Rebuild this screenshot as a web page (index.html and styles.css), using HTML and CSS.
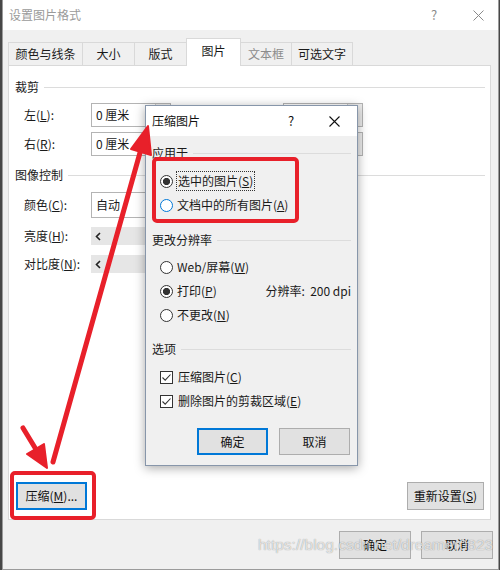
FILE: index.html
```html
<!DOCTYPE html>
<html lang="zh-CN">
<head>
<meta charset="utf-8">
<title>设置图片格式</title>
<link rel="stylesheet" href="styles.css">
</head>
<body>
<div class="window">
  <div class="titlebar">
    <span class="title">设置图片格式</span>
    <span class="tb-help">?</span>
    <span class="tb-close"><svg width="11" height="11" viewBox="0 0 11 11"><path d="M0.5 0.5L10.5 10.5M10.5 0.5L0.5 10.5" stroke="#8a8a8a" stroke-width="1"/></svg></span>
  </div>
  <div class="tabs">
    <div class="tab w1">颜色与线条</div>
    <div class="tab w2">大小</div>
    <div class="tab w3">版式</div>
    <div class="tab sel">图片</div>
    <div class="tab w5 dis">文本框</div>
    <div class="tab w6">可选文字</div>
  </div>
  <div class="panel">
    <div class="sec"><span>裁剪</span><i class="line"></i></div>
    <div class="row r1">
      <span class="lbl">左(<u>L</u>):</span>
      <span class="field"><span class="val">0 厘米</span><span class="spin"></span></span>
      <span class="lbl2">上(<u>T</u>):</span>
      <span class="field"><span class="val">0 厘米</span><span class="spin"></span></span>
    </div>
    <div class="row r2">
      <span class="lbl">右(<u>R</u>):</span>
      <span class="field"><span class="val">0 厘米</span><span class="spin"></span></span>
      <span class="lbl2">下(<u>B</u>):</span>
      <span class="field"><span class="val">0 厘米</span><span class="spin"></span></span>
    </div>
    <div class="sec s2"><span>图像控制</span><i class="line"></i></div>
    <div class="row r3">
      <span class="lbl">颜色(<u>C</u>):</span>
      <span class="combo">自动</span>
    </div>
    <div class="row r4">
      <span class="lbl">亮度(<u>H</u>):</span>
      <span class="slider"><svg width="6" height="9" viewBox="0 0 6 9"><path d="M5 1L1.5 4.5L5 8" fill="none" stroke="#222" stroke-width="1.6"/></svg></span>
    </div>
    <div class="row r5">
      <span class="lbl">对比度(<u>N</u>):</span>
      <span class="slider"><svg width="6" height="9" viewBox="0 0 6 9"><path d="M5 1L1.5 4.5L5 8" fill="none" stroke="#222" stroke-width="1.6"/></svg></span>
    </div>
    <div class="bottom">
      <span class="btn focus bc">压缩(<u>M</u>)...</span>
      <span class="btn br">重新设置(<u>S</u>)</span>
    </div>
  </div>
  <div class="footer">
    <span class="btn bf">确定</span>
    <span class="btn bf">取消</span>
  </div>
</div>

<div class="popup">
  <div class="ptitle">
    <span class="title">压缩图片</span>
    <span class="p-help">?</span>
    <span class="p-close"><svg width="11" height="11" viewBox="0 0 11 11"><path d="M0.5 0.5L10.5 10.5M10.5 0.5L0.5 10.5" stroke="#111" stroke-width="1.1"/></svg></span>
  </div>
  <div class="pbody">
    <div class="sec"><span>应用于</span><i class="line"></i></div>
    <div class="opts o1">
      <div class="opt"><i class="radio on"></i><span class="focusbox">选中的图片(<u>S</u>)</span></div>
      <div class="opt"><i class="radio hover"></i><span>文档中的所有图片(<u>A</u>)</span></div>
    </div>
    <div class="sec s2"><span>更改分辨率</span><i class="line"></i></div>
    <div class="opts o2">
      <div class="opt"><i class="radio"></i><span>Web/屏幕(<u>W</u>)</span></div>
      <div class="opt"><i class="radio on"></i><span>打印(<u>P</u>)</span><span class="res">分辨率:&nbsp;&nbsp;200 dpi</span></div>
      <div class="opt"><i class="radio"></i><span>不更改(<u>N</u>)</span></div>
    </div>
    <div class="sec s3"><span>选项</span><i class="line"></i></div>
    <div class="opts o3">
      <div class="opt"><i class="check"><svg width="11" height="11" viewBox="0 0 11 11"><path d="M1.5 5.5L4.2 8.2L9.5 2.5" fill="none" stroke="#333" stroke-width="1.1"/></svg></i><span>压缩图片(<u>C</u>)</span></div>
      <div class="opt"><i class="check"><svg width="11" height="11" viewBox="0 0 11 11"><path d="M1.5 5.5L4.2 8.2L9.5 2.5" fill="none" stroke="#333" stroke-width="1.1"/></svg></i><span>删除图片的剪裁区域(<u>E</u>)</span></div>
    </div>
    <div class="pbtns">
      <span class="btn focus pb">确定</span>
      <span class="btn pb">取消</span>
    </div>
  </div>
</div>

<svg class="annot" width="500" height="570" viewBox="0 0 500 570">
  <g fill="none" stroke="#e8202a" stroke-linejoin="round">
    <rect x="154" y="159" width="143" height="62" rx="3" stroke-width="4"/>
    <rect x="12" y="473" width="82" height="45" rx="3" stroke-width="4"/>
    <path d="M53 462L143 142" stroke-width="5" stroke-linecap="round"/>
    <path d="M23 428L40 456" stroke-width="5" stroke-linecap="round"/>
  </g>
  <g fill="#e8202a" stroke="#e8202a" stroke-width="2" stroke-linejoin="round">
    <path d="M148 126L151 155L131 149Z"/>
    <path d="M47 468L44 444L27 454Z"/>
  </g>
</svg>

<div class="watermark">https://blog.csdn.net/dreamer0823</div>
</body>
</html>
```

FILE: styles.css
```css
html, body {
  margin: 0;
  padding: 0;
}
body {
  width: 500px;
  height: 570px;
  overflow: hidden;
  position: relative;
  background: #474747;
  font-family: "Noto Sans CJK SC", "Microsoft YaHei", sans-serif;
  font-size: 12px;
  line-height: 18px;
  color: #1a1a1a;
}
u { text-decoration: underline; text-underline-offset: 1px; }

.window {
  margin-left: 2px;
  width: 497px;
  height: 570px;
  box-sizing: border-box;
  border: 1px solid #9b9b9b;
  border-top: none;
  background: #f0f0f0;
  display: flex;
  flex-direction: column;
}

.titlebar {
  height: 30px;
  background: #fff;
  display: flex;
  align-items: center;
  padding-left: 6px;
  color: #9a9a9a;
}
.titlebar .title { flex: 1; }
.tb-help {
  width: 20px;
  text-align: center;
  color: #8a8a8a;
  font-size: 13px;
}
.tb-close {
  width: 20px;
  margin-left: 24px;
  margin-right: 10px;
  display: flex;
  justify-content: center;
}

.tabs {
  display: flex;
  align-items: flex-end;
  height: 27px;
  margin-top: 8px;
  padding-left: 5px;
}
.tab {
  height: 23px;
  box-sizing: border-box;
  border: 1px solid #d9d9d9;
  border-bottom: none;
  margin-right: -1px;
  display: flex;
  align-items: center;
  justify-content: center;
  background: #f0f0f0;
}
.w1 { width: 75px; }
.w2 { width: 53px; }
.w3 { width: 53px; }
.w5 { width: 52px; }
.w6 { width: 62px; }
.tab.sel {
  width: 55px;
  height: 28px;
  background: #fff;
  position: relative;
  z-index: 1;
  margin-bottom: -1px;
  padding-bottom: 3px;
}
.tab.dis { color: #8c8c8c; }

.panel {
  margin: 0 7px 0 5px;
  height: 455px;
  box-sizing: border-box;
  border: 1px solid #d9d9d9;
  background: #fff;
  display: flex;
  flex-direction: column;
  padding: 12px 5px 9px 6px;
}

.sec {
  display: flex;
  align-items: center;
  height: 18px;
  gap: 5px;
}
.sec .line {
  flex: 1;
  height: 1px;
  background: #dcdcdc;
}
.panel .s2 { margin-top: 10px; }

.row {
  display: flex;
  align-items: center;
  height: 24px;
  padding-left: 9px;
}
.row.r1 { margin-top: 7px; }
.row.r2 { margin-top: 5px; }
.row.r3 { margin-top: 9px; }
.row.r4 { margin-top: 7px; }
.row.r5 { margin-top: 4px; }
.lbl { width: 67px; }
.lbl2 { width: 82px; margin-left: 30px; }

.field {
  width: 80px;
  height: 24px;
  box-sizing: border-box;
  border: 1px solid #b4b4b4;
  background: #fff;
  display: flex;
}
.field .val { flex: 1; padding-left: 4px; line-height: 22px; }
.field .spin {
  width: 14px;
  background: #ececec;
  border-left: 1px solid #c8c8c8;
}
.combo {
  width: 110px;
  height: 26px;
  box-sizing: border-box;
  border: 1px solid #b4b4b4;
  background: #fff;
  padding-left: 4px;
  line-height: 24px;
}
.slider {
  width: 160px;
  height: 18px;
  background: #e6e6e6;
  display: flex;
  align-items: center;
  padding-left: 4px;
  box-sizing: border-box;
}

.bottom {
  margin-top: auto;
  display: flex;
  justify-content: space-between;
  padding: 0 1px;
}

.btn {
  height: 28px;
  box-sizing: border-box;
  border: 1px solid #adadad;
  background: #e1e1e1;
  display: flex;
  align-items: center;
  justify-content: center;
  color: #111;
}
.btn.focus { border: 2px solid #0078d7; }
.bc { width: 71px; }
.br { width: 77px; }

.footer {
  display: flex;
  justify-content: flex-end;
  gap: 10px;
  padding: 11px 5px 0 0;
}
.bf { width: 72px; }

/* popup dialog */
.popup {
  position: absolute;
  left: 145px;
  top: 105px;
  width: 213px;
  height: 361px;
  box-sizing: border-box;
  border: 1px solid #8796aa;
  background: #f0f0f0;
  box-shadow: 0 2px 10px rgba(0, 0, 0, 0.35);
  display: flex;
  flex-direction: column;
}
.ptitle {
  height: 30px;
  flex: none;
  background: #fff;
  display: flex;
  align-items: center;
  padding-left: 6px;
  color: #111;
}
.ptitle .title { flex: 1; }
.p-help {
  width: 20px;
  text-align: center;
  font-size: 13px;
}
.p-close {
  width: 20px;
  margin-left: 23px;
  margin-right: 13px;
  display: flex;
  justify-content: center;
}
.pbody {
  padding: 8px 6px 0 6px;
  display: flex;
  flex-direction: column;
}
.pbody .s2 { margin-top: 14px; }
.pbody .s3 { margin-top: 13px; }
.opts { display: flex; flex-direction: column; }
.o1 { margin-top: 7px; }
.o2 { margin-top: 6px; }
.o3 { margin-top: 7px; }
.opt {
  display: flex;
  align-items: center;
  height: 24px;
  padding-left: 8px;
}
.radio {
  width: 13px;
  height: 13px;
  box-sizing: border-box;
  border: 1px solid #333;
  border-radius: 50%;
  background: #fff;
  margin-right: 4px;
  flex: none;
}
.radio.on {
  background: radial-gradient(circle, #333 0 3.3px, #fff 3.9px);
}
.radio.hover { border-color: #0078d7; }
.focusbox {
  outline: 1px dotted #333;
  outline-offset: 0;
  padding: 0 1px;
}
.res { margin-left: auto; }
.check {
  width: 13px;
  height: 13px;
  box-sizing: border-box;
  border: 1px solid #333;
  background: #fff;
  margin-right: 5px;
  flex: none;
  display: flex;
  align-items: center;
  justify-content: center;
}
.check svg { display: block; }
.pbtns {
  display: flex;
  justify-content: flex-end;
  gap: 11px;
  margin-top: 15px;
  padding-right: 1px;
}
.pb { width: 71px; height: 27px; }

.annot {
  position: absolute;
  left: 0;
  top: 0;
  pointer-events: none;
}

.watermark {
  position: absolute;
  left: 258px;
  top: 535px;
  font-family: "Liberation Sans", Arial, sans-serif;
  font-size: 15.5px;
  line-height: 20px;
  color: rgba(255, 255, 255, 0.72);
  text-shadow: 0 0 1px rgba(0, 0, 0, 0.45);
  white-space: nowrap;
}
```
